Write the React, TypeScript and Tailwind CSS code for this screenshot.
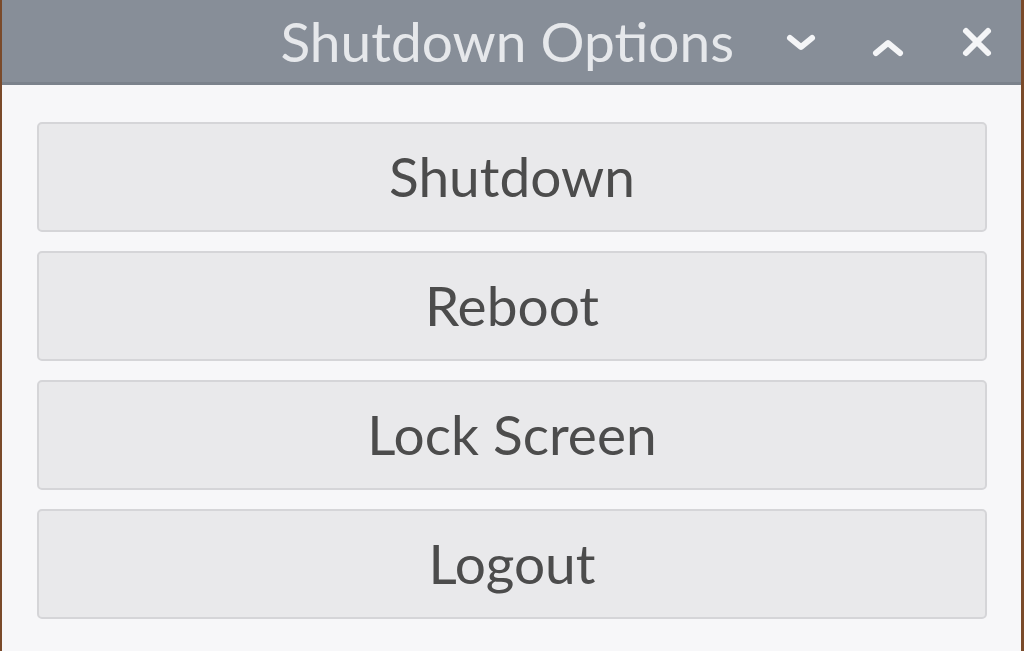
import React from "react";

const Btn = ({ label }: { label: string }) => (
  <button className="h-[110px] w-full rounded-[5px] border-2 border-[#d5d5d8] bg-[#e9e9eb] text-[55px] leading-none text-[#4c4c4c] [font-family:Lato,sans-serif]">
    <span className="relative top-[-1px]">{label}</span>
  </button>
);

export default function App() {
  return (
    <div className="flex h-[651px] w-[1024px] bg-[#7a4a2a]">
      <div className="ml-[2px] mr-[3px] flex flex-1 flex-col bg-[#f7f7f9]">
        <div className="flex h-[85px] items-center border-b-[3px] border-[#7b828c] bg-[#878e98]">
          <div className="flex-1" />
          <div className="text-[55px] leading-none text-[#e6e8eb] [font-family:Lato,sans-serif]">
            Shutdown Options
          </div>
          <div className="ml-[52px] flex items-center">
            <svg width="30" height="20" viewBox="0 0 30 20" className="mt-[4px]">
              <path d="M4 5 L15 14 L26 5" fill="none" stroke="#f4f5f7" strokeWidth="6" strokeLinecap="round" strokeLinejoin="round" />
            </svg>
            <svg width="32" height="18" viewBox="0 0 32 18" className="ml-[56px] mt-[14px]">
              <path d="M4 14 L16 4 L28 14" fill="none" stroke="#f4f5f7" strokeWidth="6" strokeLinecap="round" strokeLinejoin="round" />
            </svg>
            <svg width="32" height="32" viewBox="0 0 32 32" className="ml-[57px] mt-[2px]">
              <path d="M5 5 L27 27 M27 5 L5 27" fill="none" stroke="#f4f5f7" strokeWidth="6" strokeLinecap="round" />
            </svg>
          </div>
          <div className="w-[28px]" />
        </div>
        <div className="flex flex-col gap-[19px] pl-[35px] pr-[34px] pt-[37px]">
          <Btn label="Shutdown" />
          <Btn label="Reboot" />
          <Btn label="Lock Screen" />
          <Btn label="Logout" />
        </div>
      </div>
    </div>
  );
}
